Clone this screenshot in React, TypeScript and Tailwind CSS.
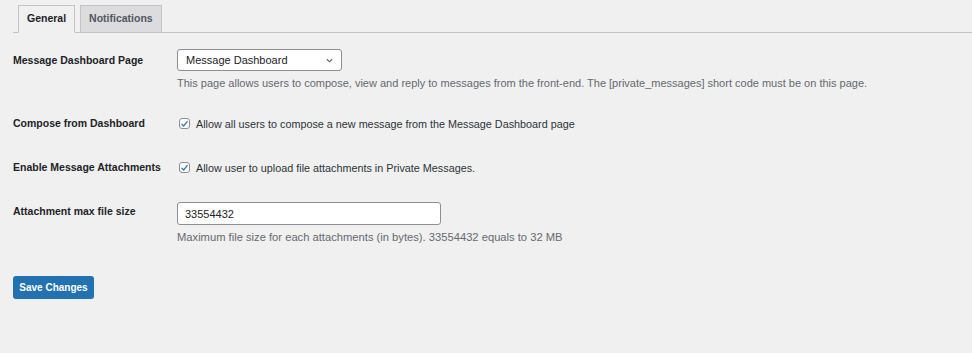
import { useState } from 'react';

function Checkbox({ checked, onChange }: { checked: boolean; onChange: () => void }) {
  return (
    <button
      type="button"
      onClick={onChange}
      className="w-[11px] h-[11px] shrink-0 rounded-[3px] border border-[#8c8f94] bg-white flex items-center justify-center"
    >
      {checked && (
        <svg viewBox="0 0 12 12" className="w-[10px] h-[10px]">
          <path d="M2.5 6.2 L5 8.6 L9.6 2.8" fill="none" stroke="#2271b1" strokeWidth="1.7" strokeLinecap="round" strokeLinejoin="round" />
        </svg>
      )}
    </button>
  );
}

export default function App() {
  const [tab, setTab] = useState('general');
  const [compose, setCompose] = useState(true);
  const [attach, setAttach] = useState(true);
  const [size, setSize] = useState('33554432');

  const tabClass = (active: boolean) =>
    `h-[28px] px-[8px] -mb-px text-[10.5px] font-bold border border-[#c3c4c7] ${
      active ? 'bg-[#f0f0f1] border-b-[#f0f0f1] text-[#1d2327]' : 'bg-[#dcdcde] text-[#50575e]'
    }`;

  return (
    <div
      className="w-[972px] h-[353px] bg-[#f0f0f1] text-[#1d2327] overflow-hidden"
      style={{ fontFamily: '"Liberation Sans", Arial, sans-serif' }}
    >
      <div className="pt-[5px] pl-[13px]">
        <div className="flex gap-[5px] pl-[5px] border-b border-[#c3c4c7]">
          <button className={tabClass(tab === 'general')} onClick={() => setTab('general')}>
            General
          </button>
          <button className={tabClass(tab === 'notifications')} onClick={() => setTab('notifications')}>
            Notifications
          </button>
        </div>

        <div className="mt-[16px] flex">
          <div className="w-[164px] pt-[4px] text-[10.5px] font-bold">Message Dashboard Page</div>
          <div>
            <div className="w-[165px] h-[22px] bg-white border border-[#8c8f94] rounded-[3px] flex items-center justify-between pl-[8px] pr-[7px] text-[11px]">
              <span>Message Dashboard</span>
              <svg viewBox="0 0 10 10" className="w-[9px] h-[9px]">
                <path d="M2 3.5 L5 6.5 L8 3.5" fill="none" stroke="#50575e" strokeWidth="1.2" />
              </svg>
            </div>
            <p className="mt-[4px] text-[11px] text-[#646970]">
              This page allows users to compose, view and reply to messages from the front-end. The [private_messages] short code must be on this page.
            </p>
          </div>
        </div>

        <div className="mt-[24px] flex items-center">
          <div className="w-[166px] text-[10.5px] font-bold">Compose from Dashboard</div>
          <Checkbox checked={compose} onChange={() => setCompose(!compose)} />
          <span className="ml-[6px] text-[10.8px] text-[#2c3338]">Allow all users to compose a new message from the Message Dashboard page</span>
        </div>

        <div className="mt-[28px] flex items-center">
          <div className="w-[166px] text-[10.5px] font-bold">Enable Message Attachments</div>
          <Checkbox checked={attach} onChange={() => setAttach(!attach)} />
          <span className="ml-[6px] text-[10.8px] text-[#2c3338]">Allow user to upload file attachments in Private Messages.</span>
        </div>

        <div className="mt-[25px] flex">
          <div className="w-[164px] pt-[3px] text-[10.5px] font-bold">Attachment max file size</div>
          <div>
            <input
              value={size}
              onChange={(e) => setSize(e.target.value)}
              className="w-[264px] h-[23px] bg-white border border-[#8c8f94] rounded-[3px] px-[7px] text-[11px] outline-none"
            />
            <p className="mt-[4px] text-[11.2px] text-[#646970]">
              Maximum file size for each attachments (in bytes). 33554432 equals to 32 MB
            </p>
          </div>
        </div>

        <button className="mt-[30px] w-[81px] h-[23px] bg-[#2271b1] text-white text-[10px] font-bold rounded-[3px]">
          Save Changes
        </button>
      </div>
    </div>
  );
}
